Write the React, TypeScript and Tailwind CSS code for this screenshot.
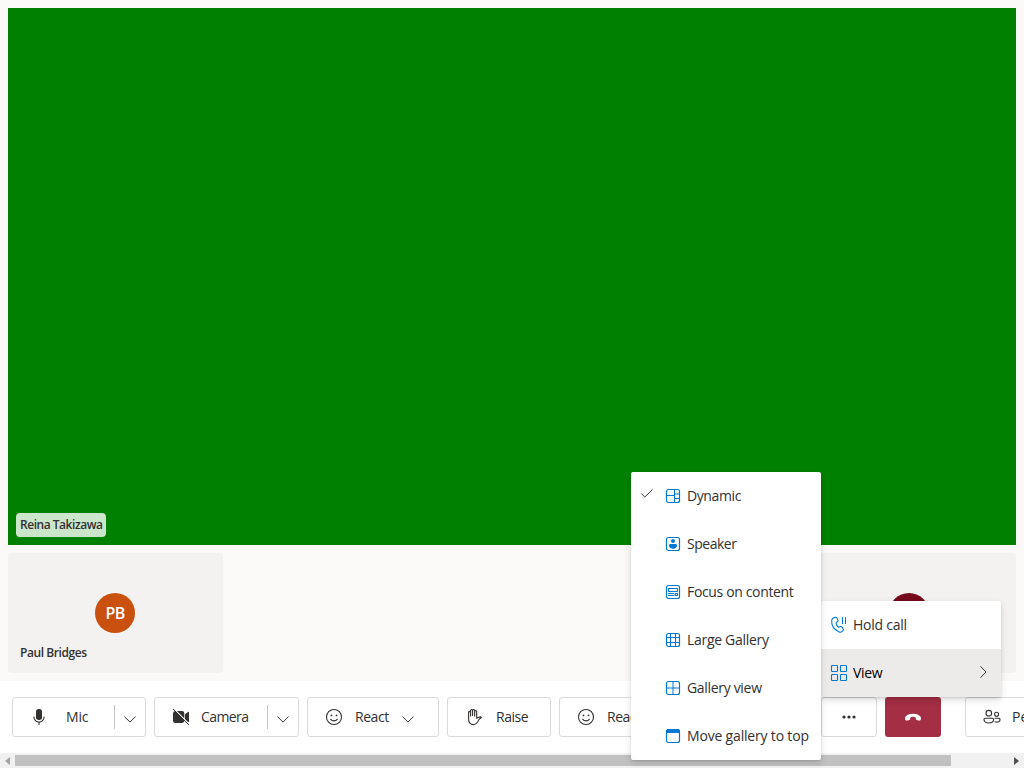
import React from 'react';

type IconProps = { className?: string };

const Svg = ({ className = '', children }: { className?: string; children: React.ReactNode }) => (
  <svg width={20} height={20} viewBox="0 0 20 20" fill="none" stroke="currentColor" strokeWidth={1.1} strokeLinecap="round" strokeLinejoin="round" className={`shrink-0 ${className}`}>
    {children}
  </svg>
);

const MicIcon = () => (
  <Svg>
    <rect x="7" y="2" width="6" height="11" rx="2.7" fill="currentColor" stroke="none" />
    <path d="M4.9 10a5.1 5.1 0 0 0 10.2 0M10 15.2v2.3" />
  </Svg>
);

const CameraOffIcon = () => (
  <Svg>
    <path d="M4.4 4H11a2.3 2.3 0 0 1 2.3 2.3v7.400A2.400 2.400 0 0 1 11.200 16H4.4A2.4 2.4 0 0 1 2 13.500v-7A2.500 2.500 0 0 1 4.400 4ZM14 7.2l3-2.3c.4-.3 1-.1 1 .5v9.2c0 .6-.6.8-1 .5l-3-2.3Z" fill="currentColor" stroke="none" />
    <path d="M3.300 2.100 18.300 17.100" stroke="white" strokeWidth="1.1" />
    <path d="m2.300 2.300 15.400 15.400" strokeWidth="1" />
  </Svg>
);

const SmileIcon = () => (
  <Svg>
    <circle cx="10" cy="10" r="7.5" />
    <circle cx="7.5" cy="8.4" r=".9" fill="currentColor" stroke="none" />
    <circle cx="12.5" cy="8.4" r=".9" fill="currentColor" stroke="none" />
    <path d="M6.7 12.3a4.2 4.2 0 0 0 6.6 0" />
  </Svg>
);

const HandIcon = () => (
  <Svg>
    <path d="M4.6 10.2V5.4a1 1 0 0 1 2 0V9M6.6 9V3.5a1 1 0 0 1 2 0v5M8.6 8.5v-5a1 1 0 0 1 2.1 0v5M10.7 9V4.5a1 1 0 0 1 2 0v6.8c1.1-.8 2.5-1.5 4.2-1.4.4 0 .5.5.3.8l-1.8 1.4c-.8.7-1.2 1.8-1.8 3-.8 1.6-2 2.5-4 2.5-3.2 0-5-2-5-5.4V9" />
  </Svg>
);

const PeopleIcon = () => (
  <Svg>
    <circle cx="6.8" cy="6.2" r="2.8" />
    <circle cx="14.6" cy="7.2" r="2" />
    <path d="M3.2 11.3h7.2c.7 0 1.2.5 1.2 1.2 0 2.2-2 3.5-4.8 3.5S2 14.7 2 12.5c0-.7.5-1.2 1.2-1.2ZM13.1 11.3h3.8c.6 0 1.1.5 1.1 1.1 0 1.7-1.5 2.6-3.4 2.6-.6 0-1.1-.1-1.6-.3" />
  </Svg>
);

const ChevronDown = ({ className = '' }: IconProps) => (
  <svg width="12" height="7" viewBox="0 0 12 7" fill="none" stroke="currentColor" strokeWidth="1" className={`shrink-0 ${className}`}>
    <path d="m.4.5 5.6 5.6L11.6.5" />
  </svg>
);

const Frame = () => <rect x="3.5" y="3.5" width="13" height="13" rx="2" strokeWidth="1.2" />;

const DynamicIcon = () => (
  <Svg><Frame /><path d="M11.5 3.5v13M3.5 9.5h8M11.5 8h5M11.5 12.5h5" /></Svg>
);
const SpeakerIcon = () => (
  <Svg>
    <Frame />
    <g fill="currentColor" stroke="none">
      <circle cx="10" cy="7" r="2" />
      <path d="M7.4 10h5.2c.8 0 1.4.6 1.4 1.3 0 2.2-1.5 3.5-4 3.5s-4-1.3-4-3.5c0-.7.6-1.3 1.4-1.3Z" />
    </g>
  </Svg>
);
const FocusIcon = () => (
  <Svg>
    <Frame />
    <rect x="5.5" y="6.5" width="9" height="3" rx=".4" />
    <path d="M5.5 11.5h5M5.5 13.5h5" />
    <rect x="12" y="11.5" width="2.5" height="2" rx=".3" />
  </Svg>
);
const LargeGalleryIcon = () => (
  <Svg><Frame /><path d="M7.500 3.500v13M12.500 3.500v13M3.500 7.500h13M3.500 12.500h13" /></Svg>
);
const GalleryIcon = () => (
  <Svg><Frame /><path d="M10 4v12M4 10h12" strokeWidth="1" /></Svg>
);
const TopIcon = () => (
  <Svg><Frame /><path d="M3.5 6.5v-1a2 2 0 0 1 2-2h9a2 2 0 0 1 2 2v1Z" fill="currentColor" /></Svg>
);
const HoldIcon = () => (
  <Svg>
    <path d="m5.2 2.6 1.1-.3c.7-.2 1.4.1 1.7.8l.9 2c.2.6.1 1.2-.4 1.6L7 8.1c.2 1.5 1.2 3.2 2.5 4.1l1.9-.6c.6-.2 1.2 0 1.6.5l1.2 1.7c.4.6.3 1.3-.2 1.8l-.8.8c-.8.8-2 1.1-3 .6C4.900 14.600 2.300 9.900 2.700 5.300c.1-1.300 1.200-2.300 2.500-2.700Z" />
    <path d="M13.500 2.500v6M16.500 2.500v6" />
  </Svg>
);
const ViewIcon = () => (
  <Svg>
    <rect x="2.500" y="2.500" width="6" height="6" rx=".8" />
    <rect x="11.500" y="2.500" width="6" height="6" rx=".8" />
    <rect x="2.500" y="11.500" width="6" height="6" rx=".8" />
    <rect x="11.500" y="11.500" width="6" height="6" rx=".8" />
  </Svg>
);

const button = 'flex h-10 shrink-0 items-center rounded-[3px] border border-[#dcdad8] bg-white';

const layouts = [
  { label: 'Dynamic', icon: <DynamicIcon />, tracking: 'tracking-[-0.4px]' },
  { label: 'Speaker', icon: <SpeakerIcon />, tracking: 'tracking-[-0.48px]' },
  { label: 'Focus on content', icon: <FocusIcon />, tracking: 'tracking-[-0.35px]' },
  { label: 'Large Gallery', icon: <LargeGalleryIcon />, tracking: 'tracking-[-0.3px]' },
  { label: 'Gallery view', icon: <GalleryIcon />, tracking: 'tracking-[-0.32px]' },
  { label: 'Move gallery to top', icon: <TopIcon />, tracking: 'tracking-[-0.18px]' },
];

export default function App() {
  return (
    <div className="relative flex h-[768px] w-[1024px] flex-col overflow-hidden bg-[#faf9f8] font-['Open_Sans','Noto_Sans',sans-serif] text-sm leading-5 text-[#323130]">
      <main className="flex h-[681px] shrink-0 flex-col gap-2 p-2">
        <section className="flex h-[537px] shrink-0 items-end bg-[#008000] p-2">
          <div className="flex h-6 w-[90px] items-center rounded bg-[#cce6cc] pl-1 text-xs font-semibold tracking-[-0.47px] whitespace-nowrap">Reina Takizawa</div>
        </section>
        <section className="flex h-[120px] justify-between">
          <div className="flex w-[215px] flex-col items-center rounded bg-[#f3f2f1] pt-10">
            <div className="mr-px flex size-10 items-center justify-center rounded-full bg-[#ca5010] text-base font-semibold tracking-[-0.8px] text-white">PB</div>
            <div className="mt-3 w-full pl-3 text-xs leading-4 font-semibold tracking-[-0.42px]">Paul Bridges</div>
          </div>
          <div className="flex w-[215px] justify-center rounded bg-[#f3f2f1] pt-10">
            <div className="size-10 rounded-full bg-[#750b1c]" />
          </div>
        </section>
      </main>

      <footer className="flex h-[72px] shrink-0 gap-2 overflow-hidden bg-white py-4 pl-3">
        <div className={`${button} w-[134px]`}>
          <span className="ml-4"><MicIcon /></span>
          <span className="ml-[17px] w-[48px] tracking-[-0.2px]">Mic</span>
          <span className="h-6 w-px bg-[#c8c6c4]" />
          <ChevronDown className="mt-1 ml-[9px]" />
        </div>
        <div className={`${button} w-[145px]`}>
          <span className="ml-4"><CameraOffIcon /></span>
          <span className="ml-[10px] w-[66px] tracking-[-0.6px]">Camera</span>
          <span className="h-6 w-px bg-[#c8c6c4]" />
          <ChevronDown className="mt-1 ml-[9px]" />
        </div>
        <div className={`${button} w-[132px]`}>
          <span className="ml-4"><SmileIcon /></span>
          <span className="ml-[11px] w-[47px] tracking-[-0.45px]">React</span>
          <ChevronDown className="mt-1" />
        </div>
        <div className={`${button} w-[104px]`}>
          <span className="ml-4"><HandIcon /></span>
          <span className="ml-3 tracking-[-0.5px]">Raise</span>
        </div>
        <div className={`${button} w-[132px]`}>
          <span className="ml-4"><SmileIcon /></span>
          <span className="ml-[11px] w-[47px] tracking-[-0.45px]">React</span>
          <ChevronDown className="mt-1" />
        </div>
        <div className={`${button} ml-[122px] w-14 justify-center`}>
          <Svg><g fill="currentColor" stroke="none"><circle cx="5" cy="10" r="1.600" /><circle cx="10" cy="10" r="1.600" /><circle cx="15" cy="10" r="1.600" /></g></Svg>
        </div>
        <div className="flex h-10 w-14 shrink-0 items-center justify-center rounded-[3px] bg-[#a42e43] text-white">
          <Svg><path d="M10 6.700c3.500 0 6.200 1.100 7.400 2.800.5.700.7 1.600.5 2.500l-.1.500c-.2.800-1 1.300-1.800 1.100l-1.900-.4c-.6-.1-1-.6-1.200-1.200l-.5-1.700C11.600 10 10.800 9.800 10 9.800s-1.600.2-2.400.5L7.100 12c-.2.600-.6 1.100-1.200 1.200l-1.900.4c-.8.200-1.600-.3-1.800-1.100l-.1-.5c-.2-.9 0-1.800.5-2.500C3.800 7.800 6.500 6.700 10 6.700Z" fill="currentColor" stroke="none" /></Svg>
        </div>
        <div className={`${button} ml-4 w-[115px]`}>
          <span className="ml-4"><PeopleIcon /></span>
          <span className="ml-[10px]">People</span>
        </div>
      </footer>

      <div className="flex h-[15px] shrink-0 items-center bg-[#f1f1f1]">
        <span className="flex w-[15px] justify-center"><svg width="5" height="8" viewBox="0 0 5 8" fill="#a3a3a3"><path d="M5 0v8L0 4Z" /></svg></span>
        <span className="h-[11px] w-[936px] bg-[#c1c1c1]" />
        <span className="flex-1" />
        <span className="flex w-[15px] justify-center"><svg width="5" height="8" viewBox="0 0 5 8" fill="#505050"><path d="M0 0v8l5-4Z" /></svg></span>
      </div>

      <div className="absolute top-[601px] left-[821px] w-[180px] rounded-[2px] bg-white shadow-[0_3px_7px_rgba(0,0,0,0.132),0_1px_2px_rgba(0,0,0,0.108)]">
        <div className="flex h-12 items-center pl-2"><span className="text-[#0078d4]"><HoldIcon /></span><span className="ml-1 tracking-[-0.25px]">Hold call</span></div>
        <div className="flex h-12 items-center bg-[#edebe9] pl-2 text-black">
          <span className="text-[#0078d4]"><ViewIcon /></span><span className="ml-1 flex-1 tracking-[-0.3px]">View</span>
          <svg width="7" height="12" viewBox="0 0 7 12" fill="none" stroke="#323130" className="mr-[14px] mb-[3px]"><path d="m.5.4 5.600 5.600L.5 11.600" /></svg>
        </div>
      </div>

      <div className="absolute top-[472px] left-[631px] w-[190px] rounded-[2px] bg-white shadow-[0_3px_7px_rgba(0,0,0,0.132),0_1px_2px_rgba(0,0,0,0.108)]">
        {layouts.map(({ label, icon, tracking }, index) => (
          <div key={label} className="flex h-12 items-center">
            <span className="ml-[10px] w-[22px]">
              {index === 0 && <svg width="12" height="9" viewBox="0 0 12 9" fill="none" stroke="#323130" className="mb-[5px]"><path d="m.4 4.700 3.400 3.300L11.600.5" /></svg>}
            </span>
            <span className="text-[#0078d4]">{icon}</span>
            <span className={`ml-1 whitespace-nowrap ${tracking}`}>{label}</span>
          </div>
        ))}
      </div>
    </div>
  );
}
